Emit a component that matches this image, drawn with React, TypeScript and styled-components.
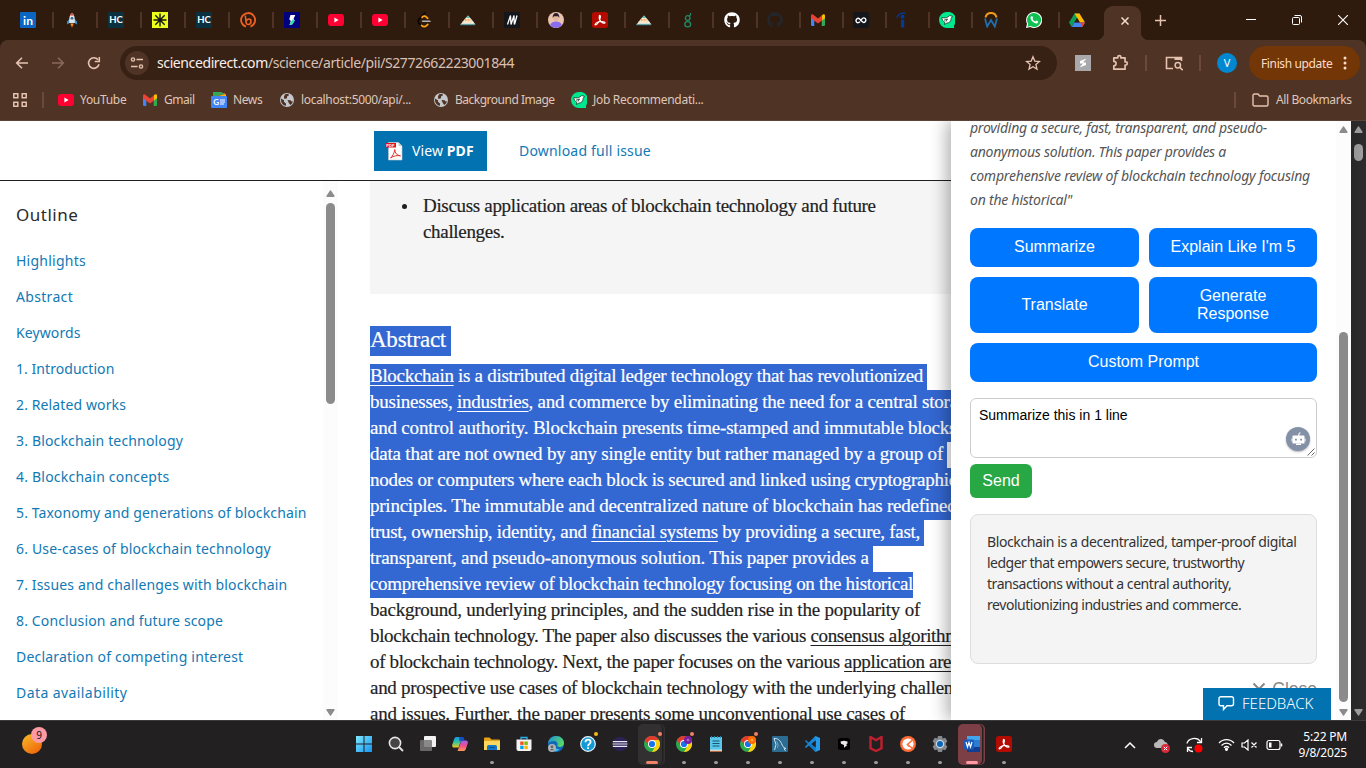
import React from 'react';
import styled, { createGlobalStyle } from 'styled-components';
import { FaGithub } from 'react-icons/fa';

const GlobalStyle = createGlobalStyle`
  * { box-sizing: border-box; }
  body { margin: 0; overflow: hidden; }
  svg { display: block; flex: none; }
`;

const ui = '"Noto Sans", "Open Sans", sans-serif';
const serif = '"Liberation Serif", serif';
const arial = '"Liberation Sans", Arial, sans-serif';

const Screen = styled.div`
  width: 1366px;
  height: 768px;
  display: flex;
  flex-direction: column;
  overflow: hidden;
  background: #fff;
  font-family: ${ui};
`;

/* ---------- browser chrome ---------- */

const Browser = styled.header`
  height: 121px;
  background: #2e1b0e;
  display: flex;
  flex-direction: column;
`;

const TabStrip = styled.div`
  height: 40px;
  display: flex;
  align-items: center;
  padding-left: 20px;
`;

const Tab = styled.div<{ $w: number; $last?: boolean }>`
  width: ${(p) => p.$w}px;
  height: 16px;
  display: flex;
  justify-content: space-between;
  flex: none;
  &::after {
    content: '';
    width: 2px;
    height: 16px;
    margin-right: ${(p) => (p.$last ? 0 : p.$w - 34)}px;
    background: ${(p) => (p.$last ? 'transparent' : '#4f3425')};
  }
`;

const ActiveTab = styled.div`
  align-self: flex-end;
  width: 37px;
  height: 34px;
  margin-left: 8px;
  border-radius: 9px 9px 0 0;
  background: #4f3425;
  display: flex;
  align-items: center;
  justify-content: center;
  padding: 0 0 5px 5px;
  position: relative;
  &::before, &::after {
    content: '';
    position: absolute;
    bottom: 0;
    width: 8px;
    height: 8px;
  }
  &::before { left: -8px; background: radial-gradient(circle at 0 0, transparent 8px, #4f3425 8.5px); }
  &::after { right: -8px; background: radial-gradient(circle at 100% 0, transparent 8px, #4f3425 8.5px); }
`;

const NewTab = styled.div`
  margin-left: 14px;
`;

const WindowControls = styled.div`
  margin-left: auto;
  display: flex;
  align-items: center;
  gap: 36px;
  padding-right: 18px;
`;

const Toolbar = styled.div`
  height: 46px;
  background: #4f3425;
  border-radius: 8px 8px 0 0;
  display: flex;
  align-items: center;
  padding: 0 6px 0 14px;
`;

const NavButtons = styled.div`
  width: 106px;
  display: flex;
  gap: 20px;
`;

const Omnibox = styled.div`
  width: 937px;
  height: 34px;
  border-radius: 17px;
  background: #372014;
  display: flex;
  align-items: center;
  padding: 0 16px 0 5px;
`;

const SiteInfo = styled.div`
  width: 24px;
  height: 24px;
  border-radius: 12px;
  background: #4f3425;
  display: flex;
  align-items: center;
  justify-content: center;
`;

const Url = styled.div`
  margin-left: 8px;
  flex: 1;
  font-size: 14px;
  line-height: 18px;
  padding-bottom: 1px;
  letter-spacing: -0.397px;
  color: #d9c0b4;
  b { font-weight: 400; color: #fbeee8; }
`;

const Extensions = styled.div`
  flex: 1;
  display: flex;
  align-items: center;
  padding-left: 18px;
`;

const Divider = styled.i<{ $ml: number; $mr: number }>`
  width: 2px;
  height: 16px;
  background: #6b4a39;
  margin: 0 ${(p) => p.$mr}px 0 ${(p) => p.$ml}px;
`;

const Extension = styled.div<{ $mr: number }>`
  margin-right: ${(p) => p.$mr}px;
`;

const Avatar = styled.div`
  width: 20px;
  height: 20px;
  border-radius: 50%;
  background: #0288d1;
  color: #fff;
  font-size: 11px;
  line-height: 20px;
  text-align: center;
`;

const UpdateButton = styled.div`
  width: 111px;
  height: 34px;
  margin-left: 12px;
  padding-left: 12px;
  border-radius: 17px;
  background: #733606;
  color: #ffdcc8;
  font-size: 12px;
  letter-spacing: -0.37px;
  white-space: nowrap;
  display: flex;
  align-items: center;
  gap: 11px;
`;

const Bookmarks = styled.div`
  height: 35px;
  background: #4f3425;
  border-bottom: 1px solid #5b4338;
  display: flex;
  align-items: center;
  padding: 0 15px 7px 13px;
  font-size: 12px;
  color: #dfc6ba;
`;

const Bookmark = styled.div<{ $w: number; $track: number }>`
  width: ${(p) => p.$w}px;
  display: flex;
  align-items: center;
  gap: 6px;
  white-space: nowrap;
  letter-spacing: ${(p) => p.$track}px;
`;

const AllBookmarks = styled(Bookmark)`
  gap: 7px;
`;

const Spacer = styled.div`
  flex: 1;
`;

/* ---------- page ---------- */

const Viewport = styled.main`
  height: 599px;
  display: flex;
  position: relative;
  overflow: hidden;
`;

const Page = styled.div`
  width: 1351px;
  display: flex;
  flex-direction: column;
`;

const ActionBar = styled.div`
  height: 60px;
  border-bottom: 1px solid #1f1f1f;
  display: flex;
  align-items: center;
  padding-left: 374px;
  flex: none;
`;

const ViewPdf = styled.div`
  width: 113px;
  height: 40px;
  background: #0272b1;
  color: #fff;
  font-size: 14px;
  letter-spacing: 0.1px;
  display: flex;
  align-items: center;
  padding-left: 11px;
  gap: 7px;
  b { font-weight: 700; }
`;

const IssueLink = styled.a`
  margin-left: 32px;
  font-size: 14px;
  letter-spacing: 0.2px;
  color: #1179b5;
`;

const Columns = styled.div`
  flex: 1;
  display: flex;
  min-height: 0;
`;

const Outline = styled.nav`
  width: 323px;
  padding: 16px 0 0 16px;
  overflow: hidden;
`;

const OutlineTitle = styled.h2`
  margin: 0 0 10px;
  height: 36px;
  font: 400 17px/36px ${ui};
  letter-spacing: 0.5px;
  color: #2a2a2a;
`;

const OutlineLink = styled.a<{ $track: number }>`
  display: block;
  height: 36px;
  font-size: 14px;
  line-height: 36px;
  white-space: nowrap;
  letter-spacing: ${(p) => p.$track}px;
  color: #1179b5;
`;

const ScrollTrack = styled.div<{ $dark?: boolean }>`
  width: 15px;
  height: 100%;
  padding-bottom: 4px;
  background: ${(p) => (p.$dark ? '#2c2c2c' : '#fcfcfc')};
  display: flex;
  flex-direction: column;
  align-items: center;
  flex: none;
`;

const Thumb = styled.div<{ $top: number; $h: number; $color: string }>`
  width: 9px;
  height: ${(p) => p.$h}px;
  margin-top: ${(p) => p.$top}px;
  border-radius: 5px;
  background: ${(p) => p.$color};
`;

const Article = styled.article`
  margin-left: 32px;
  width: 640px;
  overflow: hidden;
  font-family: ${serif};
  color: #1f1f1f;
  -webkit-text-stroke: 0.2px currentColor;
`;

const Highlights = styled.ul`
  margin: 0 0 32px;
  height: 113px;
  padding: 12px 0 0 53px;
  background: #f5f5f5;
  list-style: none;
  font-size: 19px;
  line-height: 26px;
`;

const HighlightItem = styled.li`
  position: relative;
  letter-spacing: -0.32px;
  &::before {
    content: '';
    position: absolute;
    left: -21px;
    top: 11px;
    width: 5px;
    height: 5px;
    border-radius: 50%;
    background: #1f1f1f;
  }
`;

const Heading = styled.h2`
  margin: 0 0 8px;
  width: 81px;
  height: 30px;
  font: 400 23px/28px ${serif};
  letter-spacing: -0.24px;
  background: #3367d1;
  color: #fff;
`;

const Line = styled.div<{ $track: number; $selected?: boolean; $tail?: number }>`
  width: max-content;
  height: 26px;
  padding-right: ${(p) => p.$tail ?? 0}px;
  font-size: 19px;
  line-height: 23px;
  white-space: nowrap;
  letter-spacing: ${(p) => p.$track}px;
  background: ${(p) => (p.$selected ? '#3367d1' : 'transparent')};
  color: ${(p) => (p.$selected ? '#fff' : '#1f1f1f')};
  u { text-underline-offset: 3px; text-decoration-thickness: 1px; }
`;

/* ---------- assistant panel ---------- */

const Panel = styled.aside`
  position: absolute;
  top: 0;
  right: 15px;
  width: 400px;
  height: 100%;
  background: #fff;
  box-shadow: -4px 0 16px rgba(0, 0, 0, 0.32);
  display: flex;
`;

const PanelBody = styled.div`
  width: 385px;
  padding: 0 19px;
  overflow: hidden;
`;

const Quote = styled.div`
  margin-top: -5px;
  margin-bottom: 16px;
  font-style: italic;
  font-size: 14px;
  line-height: 24px;
  color: #555;
`;

const TextLine = styled.div<{ $track: number }>`
  white-space: nowrap;
  letter-spacing: ${(p) => p.$track}px;
`;

const Actions = styled.div`
  display: grid;
  grid-template-columns: 169px 168px;
  grid-template-rows: 39px 56px 39px;
  gap: 10px;
`;

const Action = styled.button<{ $wide?: boolean }>`
  grid-column: ${(p) => (p.$wide ? 'span 2' : 'auto')};
  padding: 0 20px 1px;
  border: 0;
  border-radius: 8px;
  background: #0077ff;
  color: #fff;
  font: 16px/18px ${arial};
  white-space: pre-line;
  display: flex;
  align-items: center;
  justify-content: center;
`;

const Prompt = styled.div`
  position: relative;
  margin-top: 16px;
  height: 60px;
  padding: 7px 8px;
  border: 1px solid #ccc;
  border-radius: 6px;
  background: #fff;
  font: 14px/18px ${arial};
  color: #000;
`;

const PromptBot = styled.div`
  position: absolute;
  right: 6px;
  bottom: 6px;
  width: 24px;
  height: 24px;
  border-radius: 50%;
  background: #8390a6;
  box-shadow: 0 1px 2px rgba(0, 0, 0, 0.3);
`;

const Grip = styled.div`
  position: absolute;
  right: 1px;
  bottom: 1px;
`;

const Send = styled.button`
  display: block;
  margin-top: 6px;
  width: 62px;
  height: 34px;
  padding: 0;
  border: 0;
  border-radius: 6px;
  background: #28a745;
  color: #fff;
  font: 16px/32px ${arial};
`;

const Answer = styled.div`
  margin-top: 16px;
  height: 150px;
  padding: 16px 16px 0;
  border: 1px solid #ddd;
  border-radius: 8px;
  background: #f4f4f4;
  font-size: 14px;
  line-height: 21px;
  color: #333;
`;

const Close = styled.div`
  margin-top: 15px;
  display: flex;
  justify-content: flex-end;
  align-items: center;
  gap: 6px;
  font: 17.500px/20px ${arial};
  color: #888;
`;

const Feedback = styled.div`
  position: absolute;
  right: 35px;
  bottom: 0;
  width: 128px;
  height: 32px;
  padding: 0 0 2px 14px;
  background: #0272b1;
  color: #fff;
  font: 300 15px ${ui};
  display: flex;
  align-items: center;
  gap: 7px;
`;

/* ---------- taskbar ---------- */

const Taskbar = styled.footer`
  height: 48px;
  background: #222021;
  border-top: 1px solid #3b3b3b;
  display: flex;
  align-items: stretch;
`;

const Weather = styled.div`
  width: 348px;
  padding: 13px 0 0 22px;
`;

const Sun = styled.div`
  position: relative;
  width: 20px;
  height: 20px;
  border-radius: 50%;
  background: linear-gradient(145deg, #f6b426 10%, #f06a0c 85%);
`;

const Count = styled.span`
  position: absolute;
  left: 9px;
  top: -7px;
  width: 16px;
  height: 16px;
  border-radius: 50%;
  background: #ff99a4;
  color: #111;
  font-size: 10px;
  line-height: 16px;
  text-align: center;
`;

const TaskbarApp = styled.div<{ $tone?: string; $dot?: string }>`
  position: relative;
  width: 32px;
  display: flex;
  justify-content: center;
  padding-top: 15px;
  &::after {
    content: '';
    position: absolute;
    bottom: 4px;
    left: ${(p) => (p.$tone ? 10 : 14)}px;
    width: ${(p) => (p.$tone ? 12 : 4)}px;
    height: 3px;
    border-radius: 2px;
    background: ${(p) => p.$dot || 'transparent'};
  }
  > svg { position: relative; }
`;

const AppHighlight = styled.span<{ $color: string }>`
  position: absolute;
  left: 2px;
  top: 3px;
  width: 24px;
  height: 41px;
  border-radius: 5px;
  background: ${(p) => p.$color};
  box-shadow: 2px 0 0 -0.5px #222021, 3px 0 0 ${(p) => p.$color};
`;

const AlertDot = styled.span<{ $color: string }>`
  position: absolute;
  right: 6px;
  top: 11px;
  width: 4px;
  height: 4px;
  border-radius: 50%;
  background: ${(p) => p.$color};
`;

const Tray = styled.div`
  margin-left: auto;
  display: flex;
  align-items: center;
`;

const TrayItem = styled.div<{ $mr: number }>`
  margin-right: ${(p) => p.$mr}px;
`;

const Clock = styled.div`
  width: 60px;
  margin-right: 19px;
  font-size: 12px;
  line-height: 16px;
  letter-spacing: -0.2px;
  text-align: right;
  color: #fff;
`;

/* ---------- icons ---------- */

const Svg = ({ s = 16, children }: { s?: number; children: React.ReactNode }) => (
  <svg width={s} height={s} viewBox="0 0 16 16" fill="none">{children}</svg>
);

const Lettered = ({ bg, text, size = 8, r = 0, y = 11 }: { bg: string; text: string; size?: number; r?: number; y?: number }) => (
  <Svg>
    <rect width="16" height="16" rx={r} fill={bg} />
    <text x="8" y={y} textAnchor="middle" fontFamily="Lato" fontWeight="700" fontSize={size} fill="#fff">{text}</text>
  </Svg>
);

const YouTube = () => (
  <Svg><rect y="2" width="16" height="12" rx="3" fill="#ff0033" /><path d="M6.4 5.6 10.600 8l-4.200 2.400Z" fill="#fff" /></Svg>
);

const Rocket = () => (
  <Svg>
    <path d="M5.4 7 3 9.500v3l2.600-1.600h4.800L13 12.500v-3L10.600 7Z" fill="#3d8fc9" />
    <path d="M8 .8C5.800 2.500 5 5 5.300 11h5.400C11 5 10.200 2.500 8 .8Z" fill="#dfe5ea" />
    <path d="M8 .8C7 1.500 6.400 2.400 6 3.500h4C9.600 2.400 9 1.500 8 .8Z" fill="#d1483e" />
    <circle cx="8" cy="6.300" r="1.400" fill="#39698f" />
    <path d="M6.200 11.500h3.600L8 15.500Z" fill="#f58a1f" />
  </Svg>
);

const Burst = () => (
  <Svg>
    <rect width="16" height="16" fill="#eaff1a" />
    <path d="M8 1.500v13M1.500 8h13M3.300 3.300l9.400 9.400M12.700 3.300l-9.400 9.400" stroke="#161616" strokeWidth="1.400" />
  </Svg>
);

const Bitly = () => (
  <Svg>
    <path d="M6 14.700A7 7 0 1 1 10.500 14.600" stroke="#ee6123" strokeWidth="1.800" />
    <path d="M5.300 3.500 6.200 11c.3 1 1 1.500 2 1.500 1.600 0 2.800-1.300 2.800-3 0-1.500-.9-2.500-2.200-2.500-1.300 0-2.200.9-2.700 2.300" stroke="#ee6123" strokeWidth="1.600" />
  </Svg>
);

const Scribble = () => (
  <Svg>
    <rect width="16" height="16" fill="#000080" />
    <path d="M6.500 3h4.800L9.500 7l1.300 1.500L7.800 13H5.500l1.300-4L5.300 7.200Z" fill="#fff" />
    <path d="m8.500 7.500 2.300 1L7.800 13H5.500L7 9.500Z" fill="#2ee0a5" />
  </Svg>
);

const Pyramid = () => (
  <Svg>
    <path d="M8 3.500 11.200 7 15.500 12.500H.5L4.800 7Z" fill="#f4efe0" />
    <path d="M8 3.500 10 6H6Z" fill="#58b6b0" />
    <path d="M4.500 7.800h7" stroke="#f2a653" strokeWidth="1.700" strokeDasharray="2 1" />
    <path d="M2.500 10h11" stroke="#f8d08c" strokeWidth="1" strokeDasharray="1.500 1.200" />
    <path d="M.5 12.400h15" stroke="#4aa7b6" strokeWidth="1.500" strokeDasharray="2 1" />
  </Svg>
);

const Portrait = () => (
  <Svg>
    <circle cx="8" cy="8" r="8" fill="#e8c4ae" />
    <path d="M2 13.300C3 10.300 5.500 9.500 8 9.500s5 .8 6 3.800A8 8 0 0 1 8 16a8 8 0 0 1-6-2.700Z" fill="#8a6cf0" />
    <circle cx="8" cy="6.300" r="2.600" fill="#e3b39b" />
    <path d="M4.600 6C4.600 2.600 6 1 8 1s3.400 1.600 3.400 5L10 4.300H6Z" fill="#2a1c2e" />
  </Svg>
);

const Acrobat = () => (
  <Svg>
    <rect width="16" height="16" rx="2.500" fill="#b30b00" />
    <path d="M3 12.500c1-1.800 4.500-3 7-3 1.500 0 3 .3 3 1.200 0 1.200-2.500.3-3.800-.9C7.700 8.400 7 5.500 7.300 4c.2-.9 1.200-.8 1.200.4 0 1.800-1.500 5.400-3 7.300-1 1.200-2.300 1.600-2.500.8Z" stroke="#fff" strokeWidth="1.100" />
  </Svg>
);

const Bird = () => (
  <Svg>
    <path d="M8 0a8 8 0 1 0 0 16h7.300c-.4-1-.4-2 0-3A8 8 0 0 0 8 0Z" fill="#00e88f" />
    <path d="M2.800 5.500c2.500.6 4.200.6 5.700-.3L10.800 3.500l2.700.9-1.300 1.900c-.2 3.200-1.800 4.700-4.200 4.700l-2.500 1.500.3-2.300C4 9.500 3 7.800 2.800 5.500Z" fill="#fff" stroke="#17392c" strokeWidth=".8" />
    <path d="M5 8.300 8.500 7 7 9.500" stroke="#17392c" strokeWidth=".9" />
  </Svg>
);

const Gmail = () => (
  <Svg>
    <path d="M1 4.500h3.300V14H2.200A1.200 1.200 0 0 1 1 12.800Z" fill="#4285f4" />
    <path d="M11.700 4.500H15v8.300a1.200 1.200 0 0 1-1.200 1.200h-2.100Z" fill="#34a853" />
    <path d="M11.700 3.500 13.300 2.300C14.200 1.800 15 2.600 15 3.800v2.500l-3.300 2.400Z" fill="#fbbc04" />
    <path d="M4.300 8.700 1 6.300V3.800c0-1.300 1-2 2-1.300l5 3.900 5-3.900-1.300 1v5.200L8 11.500Z" fill="#ea4335" />
  </Svg>
);

const Drive = () => (
  <Svg>
    <path d="M5.500 1.500h5l-5.200 9L2.700 15 0 10.500Z" fill="#0f9d58" />
    <path d="M5.500 1.500h5L16 10.500h-5Z" fill="#ffba00" />
    <path d="M5.300 10.500H16L13.300 15H2.700Z" fill="#4285f4" />
    <path d="M5.700 10.200 8 6.200l2.300 4Z" fill="#2e1b0e" />
    <path d="M11 10.500h5L13.300 15Z" fill="#ea4335" />
  </Svg>
);

const Chrome = ({ badge }: { badge?: string }) => (
  <Svg>
    <circle cx="8" cy="8" r="8" fill="#2da94f" />
    <path d="M14.930 4A8 8 0 0 1 8 16l3.460-6L8 4Z" fill="#fdd00d" />
    <path d="M1.070 4A8 8 0 0 1 14.930 4H8l-3.460 6Z" fill="#e33b2e" />
    <circle cx="8" cy="8" r="4" fill="#fff" />
    <circle cx="8" cy="8" r="3.100" fill="#1a73e8" />
    {badge && <><circle cx="12" cy="4" r="4" fill={badge} /><circle cx="12" cy="4" r="1.300" fill="#ffffff" fillOpacity=".35" /></>}
  </Svg>
);

const Globe = () => (
  <Svg>
    <circle cx="8" cy="8" r="7" fill="#c4c7cc" />
    <path d="M2 6.500 5 8.300v1.500l2 1.700v2.300C4 13.500 1.500 11 2 6.500ZM6 2.200l3.500-.4.300 1.700-1.800 1v1.800L5.500 7 4.800 5ZM8.500 8l3 .2 1.500 1.500 1-.7c-.3 2-1.300 3.200-2.800 4L9.800 11Z" fill="#4f3425" />
  </Svg>
);

const News = () => (
  <Svg>
    <path d="M2 1h12v5H2Z" fill="#ea4335" /><path d="M2 0h8l4 2-12 3Z" fill="#34a853" /><path d="m8 4 7-2v4H8Z" fill="#fbbc04" />
    <rect y="4" width="16" height="12" rx="1" fill="#4285f4" />
    <text x="5" y="12.700" textAnchor="middle" fontFamily="Lato" fontWeight="700" fontSize="8" fill="#fff">G</text>
    <path d="M9 8h5M9 10h5M9 12h4" stroke="#fff" strokeWidth="1.100" />
  </Svg>
);

const Robot = () => (
  <svg width="24" height="24" viewBox="0 0 24 24" fill="none">
    <path d="M12.500 9.500c0-2 .3-3.300 1.800-4" stroke="#fff" strokeWidth="1.200" />
    <rect x="6.500" y="8.500" width="12" height="8" rx=".6" fill="#fff" />
    <path d="M5.500 11.500h1v3h-1zM18.500 11.500h1v3h-1zM10 16.500h5V18h-5z" fill="#fff" />
    <path d="M9 11.800h1.800v1.800H9zM14.200 11.800H16v1.800h-1.800z" fill="#8390a6" />
  </svg>
);

const Arrow = ({ down, color, top }: { down?: boolean; color: string; top: number }) => (
  <svg width="9" height={7 + top} viewBox={`0 ${-top} 9 ${7 + top}`}>
    <path d={down ? 'M1 0h7Q9 .3 8.500 1.200L5 6.500q-.5.6-1 0L.5 1.200Q0 .3 1 0Z' : 'M1 7h7q1-.3.5-1.200L5 .5Q4.500-.1 4 .5L.5 5.800Q0 6.700 1 7Z'} fill={color} />
  </svg>
);

const tabIcons: React.ReactNode[] = [
  <Lettered bg="#0a66c2" text="in" size={12} r={1} y={12.5} />,
  <Rocket />,
  <Lettered bg="#0b3040" text="HC" size={9.5} y={11.4} />,
  <Burst />,
  <Lettered bg="#0b3040" text="HC" size={9.5} y={11.4} />,
  <Bitly />,
  <Scribble />,
  <YouTube />,
  <YouTube />,
  <Svg>
    <path d="M8.800 1 3 7.300c-1.300 1.400-1.300 2.600 0 4l2.500 2.500" stroke="#070706" strokeWidth="1.700" strokeLinecap="round" />
    <path d="M6 5.300c1.500-1.500 3.200-1.500 4.700 0l1 1M5.500 13.300c1.700 1.700 3.700 1.700 5.300 0l1-1" stroke="#ffa116" strokeWidth="1.700" strokeLinecap="round" />
    <path d="M6.500 9.300H14" stroke="#b3b3b3" strokeWidth="1.500" strokeLinecap="round" />
  </Svg>,
  <Pyramid />,
  <Svg><rect width="16" height="16" fill="#15161a" /><path d="M3.500 12.500 6.500 3.500 7 12.500 10 3.500l.3 9M10.500 12.500l2.500-9" stroke="#fff" strokeWidth="1.300" /></Svg>,
  <Portrait />,
  <Acrobat />,
  <Pyramid />,
  <Svg>
    <circle cx="7.700" cy="6" r="2.300" stroke="#1f8a63" strokeWidth="1.300" />
    <ellipse cx="7.700" cy="12.300" rx="2.900" ry="2.600" stroke="#1f8a63" strokeWidth="1.300" />
    <path d="M9 4.300 10.500 3V1" stroke="#1f8a63" strokeWidth="1.200" />
  </Svg>,
  <FaGithub size={16} color="#fff" />,
  <FaGithub size={16} color="#24262b" />,
  <Gmail />,
  <Svg>
    <rect width="16" height="16" rx="3" fill="#14161c" />
    <path d="M6.800 9.600c-.9 1.200-2.200 1.400-3.100.6-.9-.9-.9-2.400 0-3.300.9-.8 2-.8 2.900.1l2.500 2.600c.9.900 2.200 1 3.100.1s.9-2.400 0-3.300c-1-.9-2.200-.7-3.200.5L7.300 9" stroke="#fff" strokeWidth="1.400" />
  </Svg>,
  <Svg>
    <path d="M.8 6C2 2.500 5 .8 9.500 1.200" stroke="#003a9b" strokeWidth="1.200" />
    <circle cx="6.500" cy="4.800" r="2" fill="#003a9b" /><path d="M5 7.700h3.200v7.800H5Z" fill="#003a9b" />
  </Svg>,
  <Bird />,
  <Svg>
    <path d="M2.500 5.500a5.600 5.600 0 0 1 11 0" stroke="#f09a1a" strokeWidth="2" />
    <path d="m2 6.500 2.200 8L8 8l3.800 6.500 2.200-8" stroke="#1f6fae" strokeWidth="1.800" />
  </Svg>,
  <Svg>
    <path d="M8 0a8 8 0 1 1-3.700 15L0 16l1-4.300A8 8 0 0 1 8 0Z" fill="#fff" />
    <path d="M8 1a7 7 0 1 1-3.500 13l-3 .7.700-2.900A7 7 0 0 1 8 1Z" fill="#0fc152" />
    <path d="M5.700 4.300c.8-.4 1 .5 1.300 1.200.3.700-.6 1-.4 1.500.6 1.200 1.400 1.900 2.500 2.400.6.200.9-1 1.500-.8l1.500.8c.4.400-.3 1.900-1.500 2-2.800 0-6-3.300-6.100-5.500 0-.8.500-1.300 1.200-1.600Z" fill="#fff" />
  </Svg>,
  <Drive />,
];

const outline: [string, number][] = [
  ['Highlights', 0.25],
  ['Abstract', 0.32],
  ['Keywords', 0.1],
  ['1. Introduction', 0.05],
  ['2. Related works', 0.12],
  ['3. Blockchain technology', 0.16],
  ['4. Blockchain concepts', 0.21],
  ['5. Taxonomy and generations of blockchain', 0.13],
  ['6. Use-cases of blockchain technology', 0.17],
  ['7. Issues and challenges with blockchain', 0.15],
  ['8. Conclusion and future scope', 0.14],
  ['Declaration of competing interest', 0.2],
  ['Data availability', 0.42],
];

const selectedLines: { text: React.ReactNode; track: number; tail?: number }[] = [
  { text: <><u>Blockchain</u> is a distributed digital ledger technology that has revolutionized</>, track: -0.294, tail: 4 },
  { text: <>businesses, <u>industries</u>, and commerce by eliminating the need for a central storage</>, track: -0.23 },
  { text: 'and control authority. Blockchain presents time-stamped and immutable blocks of', track: -0.205 },
  { text: 'data that are not owned by any single entity but rather managed by a group of', track: -0.212, tail: 4 },
  { text: 'nodes or computers where each block is secured and linked using cryptographic', track: -0.265 },
  { text: 'principles. The immutable and decentralized nature of blockchain has redefined', track: -0.24, tail: 6 },
  { text: <>trust, ownership, identity, and <u>financial systems</u> by providing a secure, fast,</>, track: -0.286, tail: 4 },
  { text: 'transparent, and pseudo-anonymous solution. This paper provides a', track: -0.222, tail: 4 },
  { text: 'comprehensive review of blockchain technology focusing on the historical', track: -0.329 },
];

const plainLines: { text: React.ReactNode; track: number }[] = [
  { text: 'background, underlying principles, and the sudden rise in the popularity of', track: -0.237 },
  { text: <>blockchain technology. The paper also discusses the various <u>consensus algorithms</u></>, track: -0.345 },
  { text: <>of blockchain technology. Next, the paper focuses on the various <u>application areas</u></>, track: -0.35 },
  { text: 'and prospective use cases of blockchain technology with the underlying challenges', track: -0.29 },
  { text: 'and issues. Further, the paper presents some unconventional use cases of', track: -0.224 },
];

const quote: [string, number][] = [
  ['providing a secure, fast, transparent, and pseudo-', -0.248],
  ['anonymous solution. This paper provides a', -0.251],
  ['comprehensive review of blockchain technology focusing', -0.191],
  ['on the historical"', -0.216],
];

const answer: [string, number][] = [
  ['Blockchain is a decentralized, tamper-proof digital', -0.385],
  ['ledger that empowers secure, trustworthy', -0.5],
  ['transactions without a central authority,', -0.445],
  ['revolutionizing industries and commerce.', -0.45],
];

const orange = '#f0826a';
const gray = '#9a9a9a';

const apps: { icon: React.ReactNode; dot?: string; tone?: string; alert?: string }[] = [
  { icon: <Svg><defs><linearGradient id="win" x1="0" y1="0" x2="1" y2="1"><stop stopColor="#7ce8ff" /><stop offset="1" stopColor="#1795f0" /></linearGradient></defs><path d="M0 0h7.500v7.500H0ZM8.500 0H16v7.500H8.500ZM0 8.500h7.500V16H0ZM8.500 8.500H16V16H8.500Z" fill="url(#win)" /></Svg> },
  { icon: <Svg><circle cx="7" cy="7" r="5.600" stroke="#e6e6e6" strokeWidth="1.600" fill="#454545" /><path d="m11 11 4 4" stroke="#e6e6e6" strokeWidth="1.800" /></Svg> },
  { icon: <Svg><rect x="4" y="0" width="12" height="11" rx="1" fill="#f2f2f2" /><rect y="4" width="12" height="11" rx="1" fill="#777" fillOpacity=".85" /></Svg> },
  { icon: <Svg><defs><linearGradient id="cl" x1="0" y1="0" x2="0" y2="1"><stop stopColor="#1695e8" /><stop offset=".5" stopColor="#35c49a" /><stop offset="1" stopColor="#f5c61f" /></linearGradient><linearGradient id="cr" x1="0" y1="0" x2="0" y2="1"><stop stopColor="#a45cf0" /><stop offset=".5" stopColor="#ee4f8b" /><stop offset="1" stopColor="#ff9a55" /></linearGradient></defs><path d="M4.500 1h6l-4 10.500H2C.5 11.500-.2 10 .3 8.500L2.300 2.800C2.700 1.600 3.500 1 4.500 1Z" fill="url(#cl)" /><path d="M11.500 15h-6l4-10.500H14c1.500 0 2.200 1.500 1.700 3l-2 5.700c-.4 1.200-1.200 1.800-2.200 1.800Z" fill="url(#cr)" /><path d="M7 1h3.500c1 0 1.600.8 2 3.500H9.500c-.8 0-1.300.5-1.800 1.500Z" fill="#1450c0" /></Svg> },
  { icon: <Svg><path d="M0 2.500q0-1 1-1h4.500L7.500 3.500H15q1 0 1 1V14H0Z" fill="#e8a317" /><path d="M0 5h16v8q0 1-1 1H1q-1 0-1-1Z" fill="#ffd75e" /><path d="M3 14v-3.500q0-1.500 1.500-1.500h7q1.500 0 1.500 1.500V14Z" fill="#1477c9" /><path d="M5 11.500h6" stroke="#0b4f94" /></Svg>, dot: gray },
  { icon: <Svg><path d="M5 3.500V1.500h6v2" stroke="#2bb1f0" strokeWidth="1.300" /><path d="M.5 3.500h15V13q0 2-2 2h-11q-2 0-2-2Z" fill="#f4f4f4" /><path d="M4.200 5.500h3.400v3.400H4.200Z" fill="#f25022" /><path d="M8.400 5.500h3.400v3.400H8.400Z" fill="#7fba00" /><path d="M4.200 9.700h3.400v3.400H4.200Z" fill="#00a4ef" /><path d="M8.400 9.700h3.400v3.400H8.400Z" fill="#ffb900" /></Svg> },
  { icon: <Svg><defs><linearGradient id="ed" x1="0" y1="0" x2="1" y2=".4"><stop stopColor="#1b8de0" /><stop offset="1" stopColor="#55d66b" /></linearGradient></defs><circle cx="8" cy="8" r="8" fill="#1268b8" /><path d="M0 7.500C.5 3 4 0 8 0c5 0 8 3.500 8 7 0 2.500-2 4-4 4s-3.300-1-2.500-2.300C10 7 8.500 5 6 5 3 5 .8 6 0 7.500Z" fill="url(#ed)" /><path d="M6 9.500c0 2 2.500 4 5.500 3.500-1.500 2-3.500 3-5.500 2Z" fill="#35b8ee" /><circle cx="4" cy="12" r="4" fill="#aeb4b8" /><circle cx="4" cy="10.800" r="1.400" fill="#5d646a" /><path d="M1.700 14.300q2.300-3 4.600 0" fill="#5d646a" /></Svg> },
  { icon: <Svg><circle cx="8" cy="8" r="7.300" fill="#139bd8" stroke="#e9f6fc" strokeWidth="1.200" /><path d="M5.500 6.200C5.500 4.500 6.500 3.700 8 3.700s2.600.9 2.600 2.300C10.600 7.800 8 8 8 10.200M8 11.300v1.700" stroke="#fff" strokeWidth="1.800" /></Svg>, alert: '#f5b914' },
  { icon: <Svg><circle cx="8" cy="8" r="7.300" fill="#2c2255" /><path d="M.8 5.700h14.400M.5 8h15M.8 10.300h14.400" stroke="#e8e6f0" strokeWidth="1.200" /></Svg> },
  { icon: <Chrome />, tone: '#323031', dot: orange, alert: orange },
  { icon: <Chrome badge="#7b1fa2" />, dot: gray, alert: orange },
  { icon: <Svg><path d="M2 1h12v14H2Z" fill="#5cc6e8" /><path d="M2 14.500h12V16H2Z" fill="#b5673a" /><path d="M2 13.700h12v1H2Z" fill="#eee" /><path d="M4.500 5h7M4.500 7.500h7M4.500 10h7" stroke="#10577c" strokeWidth="1.200" /><path d="M3.500 0v2M6.500 0v2M9.500 0v2M12.500 0v2" stroke="#1b87b5" strokeWidth="1" /></Svg>, dot: gray },
  { icon: <Chrome badge="#ff6d00" />, dot: gray, alert: orange },
  { icon: <Svg><rect width="16" height="16" rx="1" fill="#2c6c93" /><path d="M2.500 14 4 8.500 2 2.500c3-.5 6 1.500 7.500 5 1 2.500 1.500 4 4.500 5l-2 .3 1.500 2" stroke="#cfe2ea" strokeWidth="1" /><path d="M4.500 5.500C6 7 6.500 9 5.500 12" stroke="#8db4c8" strokeWidth=".8" /></Svg>, dot: gray },
  { icon: <Svg><path d="m11.500 0 4.500 2v12l-4.500 2L3.500 8Z" fill="#2499e8" /><path d="M11.800 4.300v7.400L7 8Z" fill="#222021" /><path d="M.8 4.900 2 4l9.500 8v4Z" fill="#1177c5" /><path d="M.8 11.100 2 12l9.500-8V0Z" fill="#1685d8" /></Svg>, dot: gray },
  { icon: <Svg><rect x="2" y="2" width="12" height="12" rx="2.500" fill="#000" /><path d="M4.500 5.500 8 4.700l3.500.8v2l-1.500.7 1.300.8L8 11.800V9L5 7.800Z" fill="#e8e8e8" /></Svg>, dot: gray },
  { icon: <Svg><path d="M2.500 1v11.300L8 15l5.500-2.700V1L8 4.200Z" stroke="#c01f2e" strokeWidth="2.400" /></Svg>, dot: gray },
  { icon: <Svg><circle cx="8" cy="8" r="8" fill="#ff6c37" /><circle cx="8" cy="8" r="5.600" fill="#fff" /><path d="m12.500 4-5 4.500L12 12M7 8l2 2.500" stroke="#ff6c37" strokeWidth="1.500" /></Svg>, dot: gray },
  { icon: <Svg><path d="M6 0h4l.7 2.500 2.600-.7 2 3.500L13.500 8l1.800 2.700-2 3.500-2.600-.7L10 16H6l-.7-2.500-2.600.7-2-3.500L2.500 8 .7 5.300l2-3.500 2.600.7Z" fill="#84898f" /><circle cx="8" cy="8" r="4.200" fill="#c8d6e2" /><circle cx="8" cy="8" r="3" fill="#0c66b5" /></Svg>, dot: gray },
  { icon: <Svg><rect x="3" width="13" height="16" rx="1" fill="#2b7cd3" /><path d="M3 0h13v4H3Z" fill="#41a5ee" /><path d="M3 11h13v5H3Z" fill="#103f91" /><rect y="3.500" width="10" height="10" rx="1" fill="#185abd" /><path d="m2 6 1.500 5L5 6.500 6.500 11 8 6" stroke="#fff" strokeWidth="1.200" /></Svg>, tone: '#7c3f45', dot: '#ff99a4' },
  { icon: <Acrobat />, dot: gray },
];

const tan = '#e6c2b0';

export default function App() {
  return (
    <Screen>
      <GlobalStyle />
      <Browser>
        <TabStrip>
          {tabIcons.map((icon, i) => (
            <Tab key={i} $w={i < 16 ? 44 : i === 24 ? 27 : 43.1} $last={i === 24}>{icon}</Tab>
          ))}
          <ActiveTab>
            <svg width="8" height="8" viewBox="0 0 8 8"><path d="m.5.5 7 7M7.500.5l-7 7" stroke="#f4ddd1" strokeWidth="1.500" /></svg>
          </ActiveTab>
          <NewTab>
            <svg width="11" height="11" viewBox="0 0 11 11"><path d="M5.500 0v11M0 5.500h11" stroke={tan} strokeWidth="1.500" /></svg>
          </NewTab>
          <WindowControls>
            <svg width="10" height="10" viewBox="0 0 10 10"><path d="M0 4.500h10" stroke="#fff" /></svg>
            <svg width="10" height="10" viewBox="0 0 10 10" fill="none" stroke="#fff"><rect x=".5" y="2.500" width="7" height="7" rx="1" /><path d="M2.500.5h5.500a1.500 1.500 0 0 1 1.500 1.500v5.500" /></svg>
            <svg width="10" height="10" viewBox="0 0 10 10"><path d="m0 0 10 10M10 0 0 10" stroke="#fff" strokeWidth="1.100" /></svg>
          </WindowControls>
        </TabStrip>
        <Toolbar>
          <NavButtons>
            <Svg><path d="M14 8H3M8 2.700 2.700 8 8 13.300" stroke={tan} strokeWidth="1.600" /></Svg>
            <Svg><path d="M2 8h11M8 2.700 13.300 8 8 13.300" stroke="#8a6a5a" strokeWidth="1.600" /></Svg>
            <Svg><path d="M13 9.300A5.300 5.300 0 1 1 12 4.700" stroke={tan} strokeWidth="1.600" /><path d="M13.300 2v4.500H8.800" stroke={tan} strokeWidth="1.600" /></Svg>
          </NavButtons>
          <Omnibox>
            <SiteInfo>
              <Svg><circle cx="4" cy="4.500" r="1.600" stroke={tan} strokeWidth="1.400" /><path d="M7.500 4.500H14M2 11.500h6.500" stroke={tan} strokeWidth="1.500" /><circle cx="12" cy="11.500" r="1.600" stroke={tan} strokeWidth="1.400" /></Svg>
            </SiteInfo>
            <Url><b>sciencedirect.com</b>/science/article/pii/S2772662223001844</Url>
            <Svg><path d="m8 1.800 1.800 4.300 4.700.4-3.600 3 1.100 4.600L8 11.700l-4 2.400 1.100-4.600-3.600-3 4.700-.4Z" stroke={tan} strokeWidth="1.300" /></Svg>
          </Omnibox>
          <Extensions>
            <Extension $mr={20}><Svg><rect width="16" height="16" fill="#a9a9ab" /><path d="M11.500 3.500 5 6v2.500h3L4.500 12.500 11 10V7.500H8Z" fill="#fff" /></Svg></Extension>
            <Extension $mr={0}><Svg s={18}><path d="M2.500 3.500H6V2.800a1.400 1.400 0 0 1 2.800 0v.7h3.700V7h.6a1.400 1.400 0 0 1 0 2.800h-.6v3.700h-10v-3a2 2 0 0 0 0-4Z" stroke={tan} strokeWidth="1.500" strokeLinejoin="round" /></Svg></Extension>
            <Divider $ml={16} $mr={18} />
            <Extension $mr={0}><svg width="18" height="16" viewBox="0 0 18 16" fill="none"><path d="M8 13.500H1.500v-11h15V6" stroke={tan} strokeWidth="1.600" /><path d="M9.500 2h7v3h-7z" fill={tan} /><circle cx="12.800" cy="10.200" r="2.700" stroke={tan} strokeWidth="1.500" /><path d="m14.700 12.200 3 3" stroke={tan} strokeWidth="1.600" /></svg></Extension>
            <Divider $ml={16} $mr={16} />
            <Avatar>V</Avatar>
            <UpdateButton>
              Finish update
              <svg width="4" height="14" viewBox="0 0 4 14" fill="#ffdcc8"><circle cx="2" cy="2" r="1.500" /><circle cx="2" cy="7" r="1.500" /><circle cx="2" cy="12" r="1.500" /></svg>
            </UpdateButton>
          </Extensions>
        </Toolbar>
        <Bookmarks>
          <svg width="14" height="14" viewBox="0 0 14 14" fill="none" stroke={tan} strokeWidth="1.500"><path d="M.8.800h4v4h-4zM9.200.800h4v4h-4zM.8 9.200h4v4h-4zM9.200 9.200h4v4h-4z" /></svg>
          <Divider $ml={15} $mr={14} />
          <Bookmark $w={84} $track={-0.3}><YouTube />YouTube</Bookmark>
          <Bookmark $w={69} $track={-0.45}><Gmail />Gmail</Bookmark>
          <Bookmark $w={68} $track={-0.4}><News />News</Bookmark>
          <Bookmark $w={154} $track={-0.325}><Globe />localhost:5000/api/...</Bookmark>
          <Bookmark $w={138} $track={-0.5}><Globe />Background Image</Bookmark>
          <Bookmark $w={140} $track={-0.295}><Bird />Job Recommendati...</Bookmark>
          <Spacer />
          <Divider $ml={0} $mr={16} />
          <AllBookmarks $w={99} $track={-0.4}>
            <svg width="17" height="14" viewBox="0 0 17 14" fill="none"><path d="M1 2.500q0-1.500 1.500-1.500H6l1.700 2h6.800Q16 3 16 4.500v7q0 1.500-1.500 1.500h-12Q1 13 1 11.500Z" stroke={tan} strokeWidth="1.400" /></svg>
            All Bookmarks
          </AllBookmarks>
        </Bookmarks>
      </Browser>

      <Viewport>
        <Page>
          <ActionBar>
            <ViewPdf>
              <svg width="20" height="20" viewBox="0 0 20 20" fill="none">
                <path d="M3.500 1.500h10L17 5v14H3.500Z" fill="#fff" stroke="#c9c9c9" strokeWidth=".6" />
                <path d="M13.500 1.500V5H17Z" fill="#ccc" />
                <path d="M5.500 17c1.500-1 4-5 4.300-8.500 0 3.500 2 6 5.700 6.300-3-.6-7 0-10 2.200Z" stroke="#e2231a" strokeWidth=".9" />
                <rect x="0" y="2" width="11" height="4.500" fill="#e2131a" />
                <text x="5.500" y="5.700" textAnchor="middle" fontFamily="Liberation Sans" fontWeight="700" fontSize="4" fill="#fff">PDF</text>
              </svg>
              <span>View <b>PDF</b></span>
            </ViewPdf>
            <IssueLink>Download full issue</IssueLink>
          </ActionBar>
          <Columns>
            <Outline>
              <OutlineTitle>Outline</OutlineTitle>
              {outline.map(([label, track]) => <OutlineLink key={label} $track={track}>{label}</OutlineLink>)}
            </Outline>
            <ScrollTrack>
              <Arrow color="#8b8b8b" top={9} />
              <Thumb $top={6} $h={201} $color="#8b8b8b" />
              <Spacer />
              <Arrow down color="#8b8b8b" top={0} />
            </ScrollTrack>
            <Article>
              <Highlights>
                <HighlightItem>Discuss application areas of blockchain technology and future<br />challenges.</HighlightItem>
              </Highlights>
              <Heading>Abstract</Heading>
              {selectedLines.map((l, i) => <Line key={i} $selected $track={l.track} $tail={l.tail}>{l.text}</Line>)}
              {plainLines.map((l, i) => <Line key={i} $track={l.track}>{l.text}</Line>)}
            </Article>
          </Columns>
        </Page>

        <ScrollTrack $dark>
          <Arrow color="#9f9f9f" top={5} />
          <Thumb $top={11} $h={17} $color="#9f9f9f" />
          <Spacer />
          <Arrow down color="#9f9f9f" top={0} />
        </ScrollTrack>

        <Panel>
          <PanelBody>
            <Quote>
              {quote.map(([t, track]) => <TextLine key={t} $track={track}>{t}</TextLine>)}
            </Quote>
            <Actions>
              <Action>Summarize</Action>
              <Action>Explain Like I'm 5</Action>
              <Action>Translate</Action>
              <Action>{'Generate\nResponse'}</Action>
              <Action $wide>Custom Prompt</Action>
            </Actions>
            <Prompt>
              Summarize this in 1 line
              <PromptBot><Robot /></PromptBot>
              <Grip><svg width="8" height="8" viewBox="0 0 8 8"><path d="M.5 7.500l7-7M4.500 7.500l3-3" stroke="#444" strokeWidth=".8" /></svg></Grip>
            </Prompt>
            <Send>Send</Send>
            <Answer>
              {answer.map(([t, track]) => <TextLine key={t} $track={track}>{t}</TextLine>)}
            </Answer>
            <Close>
              <svg width="14" height="14" viewBox="0 0 14 14"><path d="m1.500 1.500 11 11M12.500 1.500l-11 11" stroke="#888" strokeWidth="2" /></svg>
              Close
            </Close>
          </PanelBody>
          <ScrollTrack>
            <Arrow color="#8b8b8b" top={5} />
            <Thumb $top={199} $h={370} $color="#8b8b8b" />
            <Spacer />
            <Arrow down color="#8b8b8b" top={0} />
          </ScrollTrack>
        </Panel>

        <Feedback>
          <svg width="18" height="16" viewBox="0 0 18 16" fill="none"><path d="M4 1.700h10.500q2 0 2 2v5q0 2-2 2H10L6.500 14.500v-3.800H4q-2 0-2-2v-5q0-2 2-2Z" stroke="#fff" strokeWidth="1.400" /></svg>
          FEEDBACK
        </Feedback>
      </Viewport>

      <Taskbar>
        <Weather><Sun><Count>9</Count></Sun></Weather>
        {apps.map((a, i) => (
          <TaskbarApp key={i} $tone={a.tone} $dot={a.dot}>
            {a.tone && <AppHighlight $color={a.tone} />}
            {a.icon}
            {a.alert && <AlertDot $color={a.alert} />}
          </TaskbarApp>
        ))}
        <Tray>
          <TrayItem $mr={18}><svg width="12" height="8" viewBox="0 0 12 8"><path d="m1 7 5-5 5 5" fill="none" stroke="#fff" strokeWidth="1.500" /></svg></TrayItem>
          <TrayItem $mr={16}>
            <svg width="16" height="16" viewBox="0 0 16 16"><path d="M3 11a3 3 0 0 1 0-6c1-3.500 6-4.500 8 0a3 3 0 0 1 2 5l-2 1Z" fill="#b9b9b9" /><circle cx="11.500" cy="11.500" r="4.500" fill="#d8283a" /><path d="m9.800 9.800 3.400 3.400M13.200 9.800l-3.400 3.400" stroke="#fff" /></svg>
          </TrayItem>
          <TrayItem $mr={15}>
            <svg width="17" height="18" viewBox="0 0 17 18" fill="none"><path d="M1 7.500C2 2 11 .5 14.500 5.500M15.500 2v4.500H11M7 15.500c-2 0-4-1-5-3M1.500 16v-4.500H6" stroke="#fff" strokeWidth="1.300" /><circle cx="12.500" cy="12.500" r="4" fill="#f00" /></svg>
          </TrayItem>
          <TrayItem $mr={6}>
            <svg width="17" height="13" viewBox="0 0 17 13" fill="none" stroke="#fff" strokeWidth="1.300"><path d="M1 5C5 .5 12 .5 16 5M3.500 7.500c3-3.200 7-3.200 10 0M6 9.700c1.500-1.500 3.500-1.500 5 0" /><circle cx="8.500" cy="11.300" r="1" fill="#fff" /></svg>
          </TrayItem>
          <TrayItem $mr={8}>
            <svg width="17" height="12" viewBox="0 0 17 12" fill="none" stroke="#fff" strokeWidth="1.200"><path d="M1 4h2.500L7 1v10L3.500 8H1ZM10.500 3.500l5 5M15.500 3.500l-5 5" /></svg>
          </TrayItem>
          <TrayItem $mr={4}>
            <svg width="17" height="12" viewBox="0 0 17 12" fill="none"><rect x="1" y="1.500" width="13" height="9" rx="2" stroke="#fff" strokeWidth="1.200" /><path d="M3 3.500h2.500v5H3Z" fill="#fff" /><path d="M15.500 4.500v3" stroke="#fff" strokeWidth="1.500" /></svg>
          </TrayItem>
          <Clock>5:22 PM<br />9/8/2025</Clock>
        </Tray>
      </Taskbar>
    </Screen>
  );
}
